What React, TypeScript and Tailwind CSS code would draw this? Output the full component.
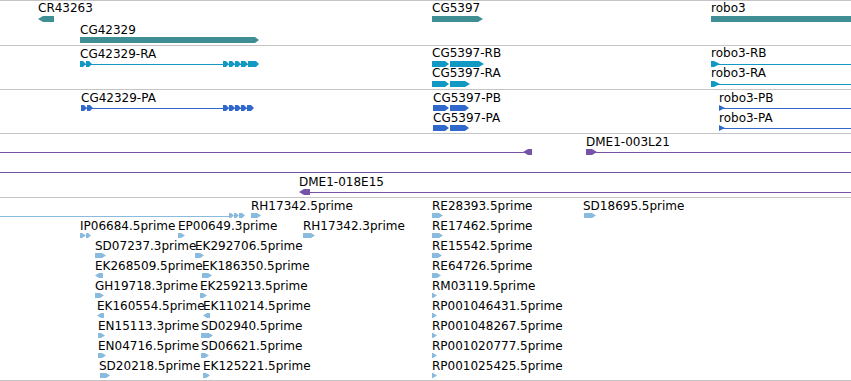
import React from "react";

type Shape = { x1: number; x2: number; y: number; h?: number; dir?: "r" | "l" | "n"; tip?: number };
type Line = { x1: number; x2: number; y: number };
type Label = { text: string; x: number; y: number };

interface TrackData {
  color: string;
  shapes: Shape[];
  lines: Line[];
  labels: Label[];
}

const points = (s: Shape) => {
  const h = s.h ?? 6;
  const t = s.tip ?? 3;
  const m = s.y + h / 2;
  if (s.dir === "l")
    return `${s.x1},${m} ${s.x1 + t},${s.y} ${s.x2},${s.y} ${s.x2},${s.y + h} ${s.x1 + t},${s.y + h}`;
  if (s.dir === "n")
    return `${s.x1},${s.y} ${s.x2},${s.y} ${s.x2},${s.y + h} ${s.x1},${s.y + h}`;
  return `${s.x1},${s.y} ${s.x2 - t},${s.y} ${s.x2},${m} ${s.x2 - t},${s.y + h} ${s.x1},${s.y + h}`;
};

const chain = (xs: number[], y: number, h = 6): Shape[] =>
  xs.slice(0, -1).map((x, i) => ({ x1: x, x2: xs[i + 1], y, h, tip: 3 }));

// genes
const genes: TrackData = {
  color: "#3f8e93",
  lines: [],
  shapes: [
    { x1: 38, x2: 54, y: 15, dir: "l", tip: 5 },
    { x1: 80, x2: 259, y: 36, tip: 4 },
    { x1: 432, x2: 483, y: 15, tip: 5 },
    { x1: 711, x2: 851, y: 15, dir: "n" },
  ],
  labels: [
    { text: "CR43263", x: 38, y: 0 },
    { text: "CG42329", x: 80, y: 22 },
    { text: "CG5397", x: 432, y: 0 },
    { text: "robo3", x: 711, y: 0 },
  ],
};

// transcripts
const transcripts: TrackData = {
  color: "#1199c3",
  lines: [
    { x1: 80, x2: 258, y: 18 },
    { x1: 711, x2: 851, y: 18 },
    { x1: 711, x2: 851, y: 38 },
  ],
  shapes: [
    ...chain([80, 86, 92], 15),
    ...chain([223, 229, 235, 241, 248, 259], 15),
    { x1: 432, x2: 449, y: 15, tip: 4 },
    { x1: 450, x2: 484, y: 15, tip: 5 },
    { x1: 432, x2: 449, y: 35, tip: 4 },
    { x1: 450, x2: 470, y: 35, tip: 5 },
    { x1: 711, x2: 720, y: 15, tip: 6 },
    { x1: 711, x2: 720, y: 35, tip: 6 },
  ],
  labels: [
    { text: "CG42329-RA", x: 80, y: 1 },
    { text: "CG5397-RB", x: 432, y: 0 },
    { text: "CG5397-RA", x: 432, y: 20 },
    { text: "robo3-RB", x: 711, y: 0 },
    { text: "robo3-RA", x: 711, y: 20 },
  ],
};

// proteins
const proteins: TrackData = {
  color: "#3068cc",
  lines: [
    { x1: 81, x2: 253, y: 18 },
    { x1: 719, x2: 851, y: 18 },
    { x1: 719, x2: 851, y: 38 },
  ],
  shapes: [
    ...chain([81, 87, 93], 15),
    ...chain([223, 229, 235, 241, 247, 254], 15),
    { x1: 433, x2: 449, y: 15, tip: 4 },
    { x1: 450, x2: 469, y: 15, tip: 4 },
    { x1: 433, x2: 449, y: 35, tip: 4 },
    { x1: 450, x2: 469, y: 35, tip: 4 },
    { x1: 719, x2: 725, y: 15, tip: 6 },
    { x1: 719, x2: 725, y: 35, tip: 6 },
  ],
  labels: [
    { text: "CG42329-PA", x: 81, y: 1 },
    { text: "CG5397-PB", x: 433, y: 1 },
    { text: "CG5397-PA", x: 433, y: 21 },
    { text: "robo3-PB", x: 719, y: 1 },
    { text: "robo3-PA", x: 719, y: 21 },
  ],
};

// clones
const clones: TrackData = {
  color: "#7453a8",
  lines: [
    { x1: 0, x2: 528, y: 18 },
    { x1: 594, x2: 851, y: 18 },
    { x1: 0, x2: 851, y: 38 },
    { x1: 305, x2: 851, y: 58 },
  ],
  shapes: [
    { x1: 523, x2: 532, y: 15, dir: "l", tip: 5 },
    { x1: 586, x2: 597, y: 15, tip: 5 },
    { x1: 299, x2: 310, y: 55, dir: "l", tip: 5 },
  ],
  labels: [
    { text: "DME1-003L21", x: 586, y: 1 },
    { text: "DME1-018E15", x: 299, y: 41 },
  ],
};

// ESTs: [label, labelX, arrowX1, arrowX2, dir]
const estRows: [string, number, number, number, "r" | "l"][][] = [
  [
    ["IP06684.5prime", 80, 80, 86, "r"],
    ["EP00649.3prime", 178, 178, 185, "r"],
    ["RH17342.3prime", 303, 303, 315, "r"],
    ["RE17462.5prime", 432, 432, 443, "r"],
  ],
  [
    ["SD07237.3prime", 95, 95, 106, "r"],
    ["EK292706.5prime", 195, 195, 204, "r"],
    ["RE15542.5prime", 432, 432, 442, "r"],
  ],
  [
    ["EK268509.5prime", 95, 95, 103, "l"],
    ["EK186350.5prime", 202, 202, 212, "r"],
    ["RE64726.5prime", 432, 432, 441, "r"],
  ],
  [
    ["GH19718.3prime", 95, 95, 104, "r"],
    ["EK259213.5prime", 200, 200, 207, "r"],
    ["RM03119.5prime", 432, 432, 437, "r"],
  ],
  [
    ["EK160554.5prime", 97, 97, 104, "l"],
    ["EK110214.5prime", 203, 203, 210, "l"],
    ["RP001046431.5prime", 432, 432, 437, "r"],
  ],
  [
    ["EN15113.3prime", 98, 98, 105, "r"],
    ["SD02940.5prime", 201, 201, 213, "r"],
    ["RP001048267.5prime", 432, 432, 437, "r"],
  ],
  [
    ["EN04716.5prime", 98, 98, 106, "r"],
    ["SD06621.5prime", 201, 201, 209, "r"],
    ["RP001020777.5prime", 432, 432, 437, "r"],
  ],
  [
    ["SD20218.5prime", 99, 100, 110, "r"],
    ["EK125221.5prime", 203, 203, 210, "r"],
    ["RP001025425.5prime", 432, 432, 437, "r"],
  ],
];

const ests: TrackData = {
  color: "#88bbdd",
  lines: [{ x1: 0, x2: 230, y: 18 }],
  shapes: [
    ...chain([229, 234, 239, 245], 15, 5),
    { x1: 251, x2: 261, y: 15, h: 5, tip: 4 },
    { x1: 432, x2: 443, y: 15, h: 5, tip: 4 },
    { x1: 584, x2: 596, y: 15, h: 5, tip: 4 },
    { x1: 86, x2: 91, y: 35, h: 5, tip: 3 },
    ...estRows.flatMap((row, k) =>
      row.map(([, , a, b, dir]) => ({ x1: a, x2: b, y: 35 + 20 * k, h: 5, dir, tip: 4 }))
    ),
  ],
  labels: [
    { text: "RH17342.5prime", x: 251, y: 1 },
    { text: "RE28393.5prime", x: 432, y: 1 },
    { text: "SD18695.5prime", x: 583, y: 1 },
    ...estRows.flatMap((row, k) => row.map(([text, x]) => ({ text, x, y: 21 + 20 * k }))),
  ],
};

const Track = ({ data, height, className }: { data: TrackData; height: number; className: string }) => (
  <div className={`relative w-full border-b border-[#c4c4c4] ${className}`}>
    <svg className="absolute left-0 top-0" width={851} height={height}>
      {data.lines.map((l, i) => (
        <rect key={i} x={l.x1} y={l.y} width={l.x2 - l.x1} height={1} fill={data.color} />
      ))}
      {data.shapes.map((s, i) => (
        <polygon key={i} points={points(s)} fill={data.color} />
      ))}
    </svg>
    {data.labels.map((lb, i) => (
      <span
        key={i}
        className="absolute whitespace-nowrap text-[12px] leading-[14px] text-black"
        style={{ left: lb.x, top: lb.y }}
      >
        {lb.text}
      </span>
    ))}
  </div>
);

export default function App() {
  return (
    <div className="w-[851px] h-[381px] overflow-hidden bg-white border-t border-[#c4c4c4] font-['DejaVu_Sans',sans-serif]">
      <Track data={genes} height={44} className="h-[45px]" />
      <Track data={transcripts} height={43} className="h-[44px]" />
      <Track data={proteins} height={43} className="h-[44px]" />
      <Track data={clones} height={63} className="h-[64px]" />
      <Track data={ests} height={182} className="h-[183px]" />
    </div>
  );
}
